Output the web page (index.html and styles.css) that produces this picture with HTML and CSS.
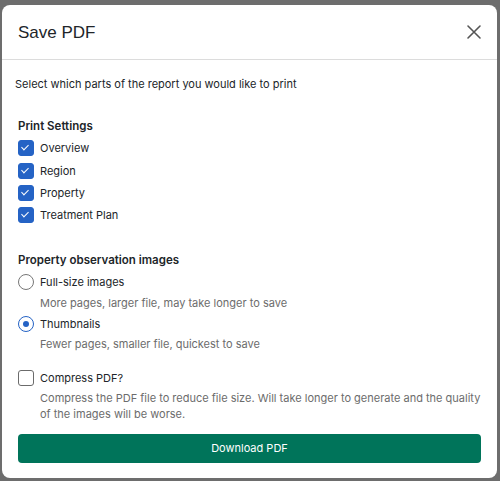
FILE: index.html
```html
<!DOCTYPE html>
<html lang="en">
<head>
    <meta charset="UTF-8">
    <meta name="viewport" content="width=device-width, initial-scale=1.0">
    <title>Save PDF</title>
    <link rel="stylesheet" href="styles.css">
</head>
<body>
    <div class="modal">
        <div class="modal-header">
            <h2 class="modal-title">Save PDF</h2>
            <button class="close-btn" aria-label="Close">
                <svg width="16" height="16" viewBox="0 0 16 16">
                    <path d="M2 2 L14 14 M14 2 L2 14" stroke="#555" stroke-width="1.6" stroke-linecap="round" fill="none"/>
                </svg>
            </button>
        </div>

        <div class="modal-body">
            <p class="intro">Select which parts of the report you would like to print</p>

            <h3 class="section-title">Print Settings</h3>
            <div class="checks">
                <label class="option"><span class="box checked"></span>Overview</label>
                <label class="option"><span class="box checked"></span>Region</label>
                <label class="option"><span class="box checked"></span>Property</label>
                <label class="option"><span class="box checked"></span>Treatment Plan</label>
            </div>

            <h3 class="section-title images-title">Property observation images</h3>
            <div class="choice">
                <label class="option"><span class="radio"></span>Full-size images</label>
                <p class="hint">More pages, larger file, may take longer to save</p>
            </div>
            <div class="choice">
                <label class="option"><span class="radio selected"></span>Thumbnails</label>
                <p class="hint">Fewer pages, smaller file, quickest to save</p>
            </div>

            <div class="choice compress">
                <label class="option"><span class="box"></span>Compress PDF?</label>
                <p class="hint">Compress the PDF file to reduce file size. Will take longer to generate and the quality of the images will be worse.</p>
            </div>

            <button class="download-btn">Download PDF</button>
        </div>
    </div>
</body>
</html>
```

FILE: styles.css
```css
body {
    margin: 0;
    padding: 5px 3px 3px 2px;
    background-color: #6d6d6d;
    font-family: 'Inter', 'Helvetica', sans-serif;
    color: #212529;
}

.modal {
    background-color: #fff;
    border-radius: 8px;
    height: 473px;
    display: flex;
    flex-direction: column;
}

.modal-header {
    flex-shrink: 0;
    height: 54px;
    padding: 0 16px;
    display: flex;
    align-items: center;
    justify-content: space-between;
    border-bottom: 1px solid #dcdcdc;
}

.modal-title {
    margin: 2px 0 0;
    font-family: 'Liberation Sans', Arial, sans-serif;
    font-size: 17px;
    font-weight: 400;
}

.close-btn {
    border: none;
    background: none;
    padding: 0;
    margin-right: -1px;
    width: 16px;
    height: 16px;
    cursor: pointer;
}

.modal-body {
    padding: 16px 16px 0;
    flex: 1;
    display: flex;
    flex-direction: column;
}

.intro {
    margin: 0 0 26px -3px;
    font-size: 11px;
    line-height: 16px;
}

.section-title {
    margin: 0 0 3px;
    font-size: 11.5px;
    font-weight: 600;
    line-height: 16px;
}

.images-title {
    margin-top: 25px;
}

.option {
    height: 22px;
    display: flex;
    align-items: center;
    gap: 6px;
    font-size: 11px;
}

.checks .option {
    height: 22.4px;
}

.box {
    width: 14px;
    height: 14px;
    border: 1px solid #6b6b6b;
    border-radius: 3px;
    position: relative;
}

.box.checked {
    background-color: #2563c5;
    border-color: #2563c5;
}

.box.checked::after {
    content: '';
    position: absolute;
    left: 4px;
    top: 2px;
    width: 3px;
    height: 6px;
    border: solid #fff;
    border-width: 0 1.5px 1.5px 0;
    transform: rotate(45deg);
}

.radio {
    width: 14px;
    height: 14px;
    border: 1px solid #777;
    border-radius: 50%;
    position: relative;
}

.radio.selected {
    border-color: #2563c5;
}

.radio.selected::after {
    content: '';
    position: absolute;
    left: 4px;
    top: 4px;
    width: 6px;
    height: 6px;
    border-radius: 50%;
    background-color: #2563c5;
}

.hint {
    margin: 2px 0 2px 22px;
    font-size: 11px;
    line-height: 16px;
    color: #6c6c6c;
}

.choice + .choice .hint {
    margin-top: 1px;
}

.compress {
    margin-top: 13px;
}

.compress .hint {
    margin: 1px 0 0 22px;
}

.download-btn {
    margin-top: 12px;
    height: 29px;
    border: none;
    border-radius: 4px;
    background-color: #00745a;
    color: #fff;
    font-family: inherit;
    font-size: 11px;
    cursor: pointer;
}
```
